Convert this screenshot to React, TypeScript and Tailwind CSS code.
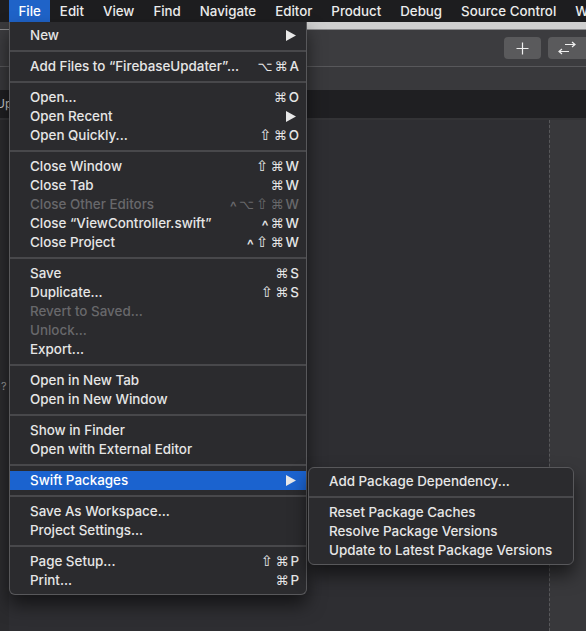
import React from "react";

type Item =
  | { type: "sep" }
  | { type: "item"; label: string; shortcut?: string; arrow?: boolean; disabled?: boolean; active?: boolean };

const items: Item[] = [
  { type: "item", label: "New", arrow: true },
  { type: "sep" },
  { type: "item", label: "Add Files to “FirebaseUpdater”...", shortcut: "⌥⌘A" },
  { type: "sep" },
  { type: "item", label: "Open...", shortcut: "⌘O" },
  { type: "item", label: "Open Recent", arrow: true },
  { type: "item", label: "Open Quickly...", shortcut: "⇧⌘O" },
  { type: "sep" },
  { type: "item", label: "Close Window", shortcut: "⇧⌘W" },
  { type: "item", label: "Close Tab", shortcut: "⌘W" },
  { type: "item", label: "Close Other Editors", shortcut: "^⌥⇧⌘W", disabled: true },
  { type: "item", label: "Close “ViewController.swift”", shortcut: "^⌘W" },
  { type: "item", label: "Close Project", shortcut: "^⇧⌘W" },
  { type: "sep" },
  { type: "item", label: "Save", shortcut: "⌘S" },
  { type: "item", label: "Duplicate...", shortcut: "⇧⌘S" },
  { type: "item", label: "Revert to Saved...", disabled: true },
  { type: "item", label: "Unlock...", disabled: true },
  { type: "item", label: "Export..." },
  { type: "sep" },
  { type: "item", label: "Open in New Tab" },
  { type: "item", label: "Open in New Window" },
  { type: "sep" },
  { type: "item", label: "Show in Finder" },
  { type: "item", label: "Open with External Editor" },
  { type: "sep" },
  { type: "item", label: "Swift Packages", arrow: true, active: true },
  { type: "sep" },
  { type: "item", label: "Save As Workspace..." },
  { type: "item", label: "Project Settings..." },
  { type: "sep" },
  { type: "item", label: "Page Setup...", shortcut: "⇧⌘P" },
  { type: "item", label: "Print...", shortcut: "⌘P" },
];

const sub: Item[] = [
  { type: "item", label: "Add Package Dependency..." },
  { type: "sep" },
  { type: "item", label: "Reset Package Caches" },
  { type: "item", label: "Resolve Package Versions" },
  { type: "item", label: "Update to Latest Package Versions" },
];

const Arrow = () => (
  <svg width="10" height="11" viewBox="0 0 10 11" className="mr-[3px]">
    <polygon points="0,0 10,5.5 0,11" fill="#e8e8e8" />
  </svg>
);

function Shortcut({ s }: { s: string }) {
  const chars = Array.from(s);
  return (
    <span className="flex items-center whitespace-nowrap gap-[2px]">
      {chars.map((c, i) => {
        if (c === "^")
          return (
            <span key={i} className="font-['Inter',sans-serif] text-[15px] leading-none font-medium pt-[3px]">
              ^
            </span>
          );
        if (c === "⇧")
          return (
            <span key={i} className="font-['DejaVu_Sans',sans-serif] text-[15px] leading-none">
              {c}
            </span>
          );
        if (c === "⌘" || c === "⌥")
          return (
            <span key={i} className="font-['DejaVu_Sans',sans-serif] text-[13px] leading-none">
              {c}
            </span>
          );
        return (
          <span key={i} className="leading-none">
            {c}
          </span>
        );
      })}
    </span>
  );
}

function Row({ it }: { it: Item }) {
  if (it.type === "sep")
    return (
      <div className="h-[12px] flex items-center">
        <div className="h-[2px] w-full bg-[#48484b]" />
      </div>
    );
  return (
    <div
      className={`h-[19px] flex items-center justify-between pr-[7px] pl-[20px] ${
        it.active ? "bg-[#1b63cf] text-white" : it.disabled ? "text-[#68686b]" : "text-[#e6e6e6]"
      }`}
    >
      <span className="whitespace-nowrap">{it.label}</span>
      {it.shortcut && <Shortcut s={it.shortcut} />}
      {it.arrow && <Arrow />}
    </div>
  );
}

export default function App() {
  const bar = ["File", "Edit", "View", "Find", "Navigate", "Editor", "Product", "Debug", "Source Control", "Window"];
  return (
    <div className="relative w-[586px] h-[631px] overflow-hidden bg-[#2d2d31] font-['Inter','DejaVu_Sans',sans-serif] flex flex-col">
      {/* menu bar */}
      <div className="h-[22px] bg-[#1d1d1f] flex items-stretch pl-[9px] text-[13.3px] font-medium text-[#ececec] shrink-0">
        {bar.map((b, i) => (
          <div
            key={b}
            className={`px-[9.5px] pt-px flex items-center whitespace-nowrap ${i === 0 ? "bg-[#1f63c8] text-white" : ""}`}
          >
            {b}
          </div>
        ))}
      </div>
      {/* light stripe */}
      <div className="h-[7px] flex shrink-0">
        <div className="w-[303px] bg-[#3a3a3d]" />
        <div className="flex-1 bg-[#cfcfcf]" />
      </div>
      <div className="h-px bg-[#8a8a8c] shrink-0" />
      {/* toolbar */}
      <div className="h-[36px] bg-[#3c3c3f] flex justify-end items-start pt-[7px] gap-[7px] shrink-0">
        <div className="w-[37px] h-[22px] rounded-[4px] bg-[#5a5a5c] flex items-center justify-center">
          <svg width="13" height="13" viewBox="0 0 13 13">
            <path d="M6.5 0.5v12M0.5 6.5h12" stroke="#f0f0f0" strokeWidth="1.2" />
          </svg>
        </div>
        <div className="w-[38px] h-[22px] rounded-l-[4px] bg-[#5a5a5c] flex items-center justify-center">
          <svg width="20" height="14" viewBox="0 0 20 14">
            <path d="M8 3.5h10M15 1l3 2.5-3 2.5M12 10.5H2M5 8l-3 2.5 3 2.5" stroke="#f0f0f0" strokeWidth="1.2" fill="none" />
          </svg>
        </div>
      </div>
      <div className="h-px bg-[#58585b] shrink-0" />
      <div className="h-[23px] bg-[#39393c] shrink-0" />
      <div className="h-[28px] bg-[#1f1f22] flex items-center shrink-0">
        <span className="text-[12px] text-[#cfcfcf] -ml-[4px]">Up</span>
      </div>
      <div className="h-[2px] bg-[#333336] shrink-0" />
      {/* editor */}
      <div className="flex-1 flex">
        <div className="w-[9px] bg-[#2b2b2e] pt-[252px]">
          <span className="text-[11px] text-[#9a9a9a] pl-[1px]">?</span>
        </div>
        <div className="flex-1 bg-[#2e2e32]" />
        <div className="w-[37px] bg-[#38383b] border-l border-dashed border-[#58585b]" />
      </div>

      {/* File menu */}
      <div className="absolute left-[9px] top-[22px] w-[298px] bg-[#2b2b2e] border border-t-0 border-[#58585b] rounded-b-[6px] pt-[4px] pb-[4px] text-[13.4px] font-medium shadow-[0_10px_18px_rgba(0,0,0,0.55)]">
        {items.map((it, i) => (
          <Row key={i} it={it} />
        ))}
      </div>

      {/* Submenu */}
      <div className="absolute left-[308px] top-[467px] w-[266px] bg-[#2b2b2e] border border-[#58585b] rounded-[6px] pt-[4px] pb-[4px] text-[13.4px] font-medium shadow-[0_10px_18px_rgba(0,0,0,0.55)]">
        {sub.map((it, i) => (
          <Row key={i} it={it} />
        ))}
      </div>
    </div>
  );
}
